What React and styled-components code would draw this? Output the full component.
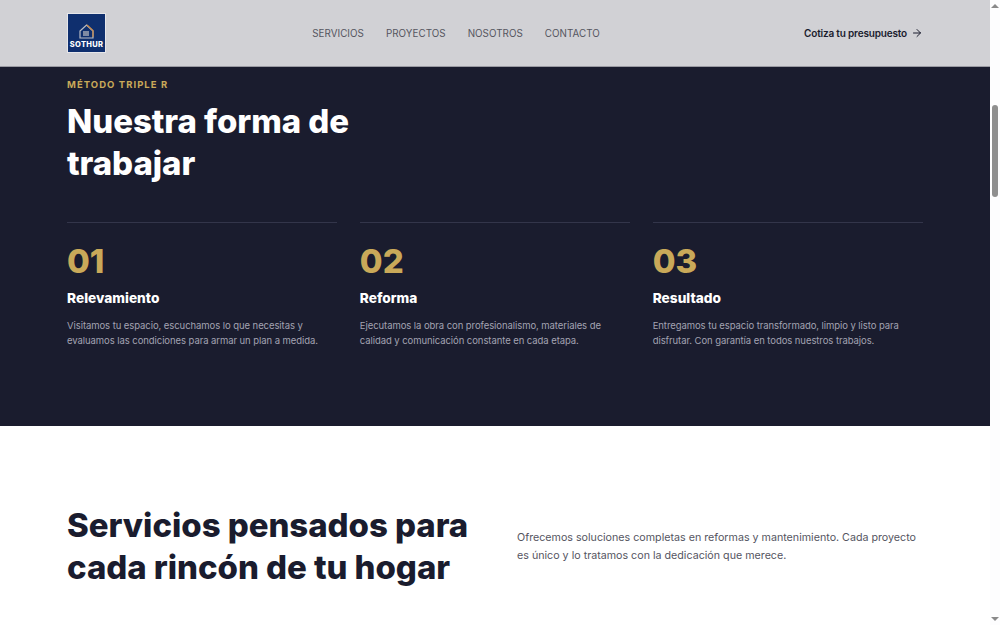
import React from 'react';
import styled, { createGlobalStyle } from 'styled-components';
import { ArrowRight } from 'lucide-react';

const steps = [
    { num: '01', title: 'Relevamiento', text: 'Visitamos tu espacio, escuchamos lo que necesitas y evaluamos las condiciones para armar un plan a medida.' },
    { num: '02', title: 'Reforma', text: 'Ejecutamos la obra con profesionalismo, materiales de calidad y comunicación constante en cada etapa.' },
    { num: '03', title: 'Resultado', text: 'Entregamos tu espacio transformado, limpio y listo para disfrutar. Con garantía en todos nuestros trabajos.' },
];

const links = ['SERVICIOS', 'PROYECTOS', 'NOSOTROS', 'CONTACTO'];

const Global = createGlobalStyle`
    html, body {
        margin: 0;
        height: 100%;
        overflow: hidden;
        background: #fff;
    }
    * {
        box-sizing: border-box;
    }
`;

const Page = styled.div`
    display: flex;
    width: 1000px;
    height: 625px;
    overflow: hidden;
    font-family: Inter, "Liberation Sans", sans-serif;
`;

const Main = styled.div`
    width: 990px;
    flex: none;
`;

const Nav = styled.header`
    display: flex;
    align-items: center;
    justify-content: space-between;
    height: 67px;
    padding: 0 67px;
    background: #d1d1d5;
    border-bottom: 1px solid #9a9aa2;
`;

const Logo = styled.div`
    display: flex;
    flex-direction: column;
    align-items: center;
    width: 39px;
    height: 40px;
    padding-top: 9px;
    background: #0f2f6e;
    border: 1px solid #e6e6ea;
`;

const LogoText = styled.span`
    margin-top: 1px;
    font-size: 7.5px;
    line-height: 9px;
    font-weight: 800;
    letter-spacing: 0.3px;
    color: #fff;
`;

const Links = styled.nav`
    display: flex;
    gap: 22px;
    margin: 2px 0 0 2px;
`;

const NavLink = styled.a`
    font-size: 9.8px;
    line-height: 14px;
    font-weight: 400;
    letter-spacing: 0.05px;
    color: #55555f;
`;

const Cta = styled.a`
    display: flex;
    align-items: center;
    gap: 4px;
    font-size: 10px;
    font-weight: 600;
    letter-spacing: -0.17px;
    color: #1a1c2e;
`;

const Dark = styled.section`
    height: 359px;
    padding: 11px 67px 0;
    background: #1a1c2e;
`;

const Eyebrow = styled.div`
    font-size: 9.5px;
    line-height: 13px;
    font-weight: 700;
    letter-spacing: 1.05px;
    color: #c9a959;
`;

const Heading = styled.h2`
    margin: 0;
    font-size: 33px;
    line-height: 42px;
    font-weight: 800;
    letter-spacing: -0.05px;
    color: ${(props) => props.color};
`;

const DarkHeading = styled(Heading)`
    width: 320px;
    margin-top: 9px;
`;

const Steps = styled.div`
    display: grid;
    grid-template-columns: repeat(3, 1fr);
    gap: 22.5px;
    margin-top: 38px;
`;

const Step = styled.div`
    padding-top: 18px;
    border-top: 1px solid #33354a;
`;

const Num = styled.div`
    font-size: 33px;
    line-height: 40px;
    font-weight: 800;
    color: #c9a959;
`;

const StepTitle = styled.h3`
    margin: 7px 0 0;
    font-size: 13.7px;
    line-height: 20px;
    font-weight: 800;
    color: #fff;
`;

const StepText = styled.p`
    margin: 10px 0 0;
    font-size: 9.5px;
    line-height: 15px;
    letter-spacing: -0.07px;
    color: #a3a3b2;
`;

const Light = styled.section`
    display: grid;
    grid-template-columns: 1fr 406px;
    gap: 42px;
    align-items: center;
    padding: 78px 67px 0;
`;

const Lead = styled.p`
    margin: 2px 0 0;
    font-size: 10.7px;
    line-height: 18px;
    color: #55555f;
`;

const Scrollbar = styled.div`
    display: flex;
    flex-direction: column;
    align-items: center;
    flex: 1;
    background: #fdfdfe;
`;

const Arrow = styled.div`
    width: 0;
    height: 0;
    border-left: 4px solid transparent;
    border-right: 4px solid transparent;
    ${(props) => props.down ? 'border-top: 4px solid #8a8a8a;' : 'border-bottom: 4px solid #8a8a8a;'}
`;

const UpArrow = styled(Arrow)`
    margin-top: 4px;
`;

const DownArrow = styled(Arrow)`
    margin-top: auto;
    margin-bottom: 4px;
`;

const Thumb = styled.div`
    width: 6px;
    height: 92px;
    margin-top: 97px;
    border-radius: 3px;
    background: #8f8f8f;
`;

const HomeIcon = () => (
    <svg width="17" height="16" viewBox="0 0 17 16" fill="none">
        <path d="M2 8 L8.5 2 L15 8 V15 H2 Z" stroke="#b9bcc4" strokeWidth="1.2" />
        <path d="M9 2 L15 7.5 V14" stroke="#c98a4a" strokeWidth="1.2" />
        <rect x="5" y="8" width="6" height="5" fill="#7f8aa3" />
    </svg>
);

export default function App() {
    return (
        <Page>
            <Global />
            <Main>
                <Nav>
                    <Logo>
                        <HomeIcon />
                        <LogoText>SOTHUR</LogoText>
                    </Logo>
                    <Links>
                        {links.map((link) => <NavLink key={link}>{link}</NavLink>)}
                    </Links>
                    <Cta>Cotiza tu presupuesto <ArrowRight size={12} /></Cta>
                </Nav>
                <Dark>
                    <Eyebrow>MÉTODO TRIPLE R</Eyebrow>
                    <DarkHeading color="#fff">Nuestra forma de trabajar</DarkHeading>
                    <Steps>
                        {steps.map((step) => (
                            <Step key={step.num}>
                                <Num>{step.num}</Num>
                                <StepTitle>{step.title}</StepTitle>
                                <StepText>{step.text}</StepText>
                            </Step>
                        ))}
                    </Steps>
                </Dark>
                <Light>
                    <Heading color="#1a1c2e">Servicios pensados para cada rincón de tu hogar</Heading>
                    <Lead>Ofrecemos soluciones completas en reformas y mantenimiento. Cada proyecto es único y lo tratamos con la dedicación que merece.</Lead>
                </Light>
            </Main>
            <Scrollbar>
                <UpArrow />
                <Thumb />
                <DownArrow down />
            </Scrollbar>
        </Page>
    );
}
